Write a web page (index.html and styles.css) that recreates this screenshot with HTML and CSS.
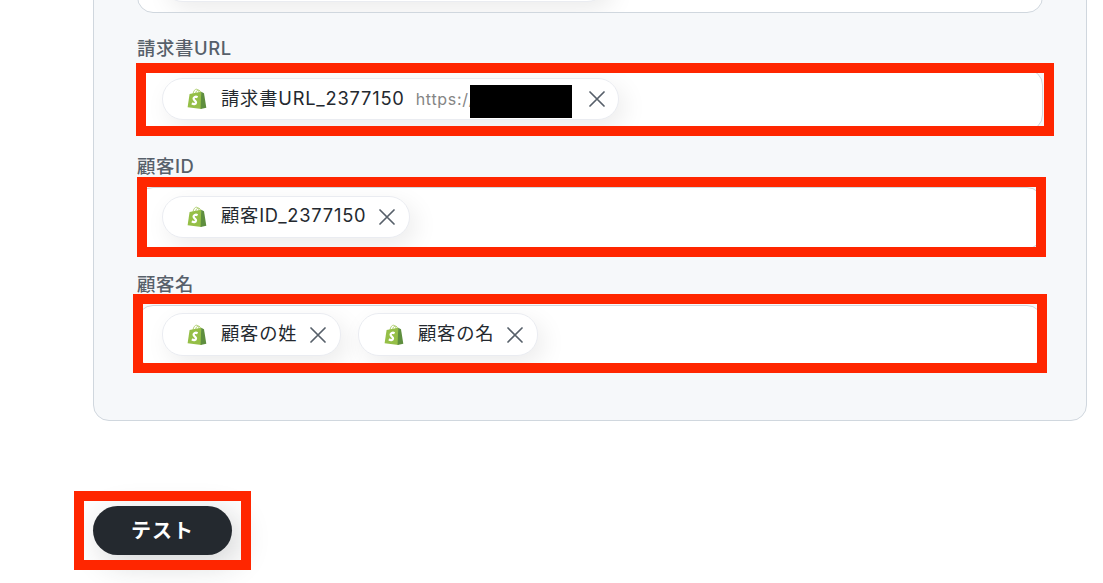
FILE: index.html
```
<!DOCTYPE html>
<html lang="ja">
<head>
    <meta charset="UTF-8">
    <meta name="viewport" content="width=device-width, initial-scale=1.0">
    <title>テスト</title>
    <link rel="stylesheet" href="styles.css">
</head>
<body>
    <svg class="defs" width="0" height="0">
        <symbol id="shopify" viewBox="0 0 20 22">
            <path d="M6 6C6.4 2.8 8.2 1 9.8 1.2C11.2 1.4 11.8 3 12 5M8.6 5.5C9 3 10.5 1.6 12 2.1C13 2.5 13.4 3.4 13.6 4.6" fill="none" stroke="#b3d177" stroke-width="1"/>
            <path d="M2.6 6L14.2 3.8L14.6 21L0.6 19.2Z" fill="#95bf47"/>
            <path d="M14.2 3.8L17 5.3L19.3 19.7L13.6 21Z" fill="#5e8e3e"/>
            <path d="M10.6 9.2C8.5 8.1 6.5 9.2 6.6 10.8C6.7 12.6 9.3 12.8 9 14.6C8.7 16.4 6.5 16.4 4.9 15.3" fill="none" stroke="#fff" stroke-width="2.3"/>
        </symbol>
        <symbol id="close" viewBox="0 0 16 16">
            <path d="M1 1L15 15M15 1L1 15" fill="none" stroke="#57606a" stroke-width="1.7" stroke-linecap="round"/>
        </symbol>
    </svg>
    <div class="panel">
        <div class="field">
            <div class="input"><div class="chip chip-cut"></div></div>
        </div>
        <div class="field">
            <div class="label">請求書URL</div>
            <div class="input">
                <div class="chip chip-url">
                    <svg class="logo"><use href="#shopify"/></svg>
                    <span class="name">請求書URL_2377150</span>
                    <span class="url">https://</span>
                    <svg class="close"><use href="#close"/></svg>
                </div>
            </div>
            <div class="redacted"></div>
            <div class="mark mark-url"></div>
        </div>
        <div class="field">
            <div class="label">顧客ID</div>
            <div class="input">
                <div class="chip chip-id">
                    <svg class="logo"><use href="#shopify"/></svg>
                    <span class="name">顧客ID_2377150</span>
                    <svg class="close"><use href="#close"/></svg>
                </div>
            </div>
            <div class="mark mark-id"></div>
        </div>
        <div class="field">
            <div class="label">顧客名</div>
            <div class="input">
                <div class="chip chip-name">
                    <svg class="logo"><use href="#shopify"/></svg>
                    <span class="name">顧客の姓</span>
                    <svg class="close"><use href="#close"/></svg>
                </div>
                <div class="chip chip-name">
                    <svg class="logo"><use href="#shopify"/></svg>
                    <span class="name">顧客の名</span>
                    <svg class="close"><use href="#close"/></svg>
                </div>
            </div>
            <div class="mark mark-name"></div>
        </div>
    </div>
    <div class="actions">
        <button class="test">テスト</button>
        <div class="mark mark-test"></div>
    </div>
</body>
</html>
```
FILE: styles.css
```
* {
    box-sizing: border-box;
}
body {
    margin: 0;
    height: 583px;
    overflow: hidden;
    background: #fff;
    font-family: Inter, "Noto Sans CJK JP", sans-serif;
    display: flex;
    flex-direction: column;
    align-items: flex-start;
}
.defs {
    position: absolute;
}
.panel {
    flex: none;
    width: 994px;
    margin: -70px 0 0 93px;
    padding: 20px 43px 53px;
    background: #f6f8fa;
    border: 1px solid #d0d7de;
    border-radius: 16px;
}
.field {
    position: relative;
}
.label {
    height: 56px;
    padding-top: 22px;
    font-size: 18.4px;
    line-height: 26px;
    font-weight: 500;
    letter-spacing: 0.6px;
    color: #57606a;
    white-space: nowrap;
}
.input {
    height: 62px;
    padding: 8px 24px;
    display: flex;
    gap: 17px;
    background: #fff;
    border: 1px solid #d0d7de;
    border-radius: 16px;
    overflow: hidden;
}
.chip {
    flex: none;
    height: 42px;
    padding: 0 13px 0 24px;
    display: flex;
    align-items: center;
    background: #fff;
    border: 1px solid #eaecf1;
    border-radius: 21px;
    box-shadow: 6px 8px 24px rgba(0, 0, 0, 0.08);
    white-space: nowrap;
}
.chip-cut {
    width: 446px;
}
.chip-url {
    width: 457px;
}
.chip-id {
    width: 248px;
    padding-right: 14px;
}
.chip-name {
    width: 179px;
    height: 43px;
    margin-top: -1px;
    padding-right: 14px;
}
.chip-name + .chip-name {
    width: 180px;
    padding-left: 25px;
}
.logo {
    flex: none;
    width: 20px;
    height: 22px;
    margin-right: 14px;
}
.name {
    margin-top: -2px;
    font-size: 18.3px;
    letter-spacing: 0.8px;
    line-height: 26px;
    color: #24292f;
}
.chip-id .name,
.chip-name .name {
    margin-top: -4px;
}
.url {
    margin-left: 11px;
    font-size: 16px;
    letter-spacing: 0.7px;
    color: #858585;
}
.close {
    flex: none;
    width: 16px;
    height: 16px;
    margin-left: auto;
}
.redacted {
    position: absolute;
    left: 333px;
    top: 72px;
    width: 102px;
    height: 33px;
    background: #000;
}
/* red highlight frames */
.mark {
    position: absolute;
    border: 10px solid #ff2600;
}
.mark-url {
    left: -1px;
    top: 50px;
    width: 918px;
    height: 73px;
}
.mark-id {
    left: 0;
    top: 46px;
    width: 909px;
    height: 80px;
}
.mark-name {
    left: -4px;
    top: 45px;
    width: 914px;
    height: 79px;
}
.actions {
    position: relative;
    margin: 85px 0 0 93px;
}
.test {
    display: block;
    width: 139px;
    height: 49px;
    padding: 0 0 2px;
    border: none;
    border-radius: 25px;
    background: #24292f;
    color: #fff;
    font-family: inherit;
    font-size: 20px;
    font-weight: 600;
    letter-spacing: 1px;
    box-shadow: 8px 8px 32px rgba(36, 41, 47, 0.2);
}
.mark-test {
    left: -19px;
    top: -15px;
    width: 177px;
    height: 79px;
}
```
